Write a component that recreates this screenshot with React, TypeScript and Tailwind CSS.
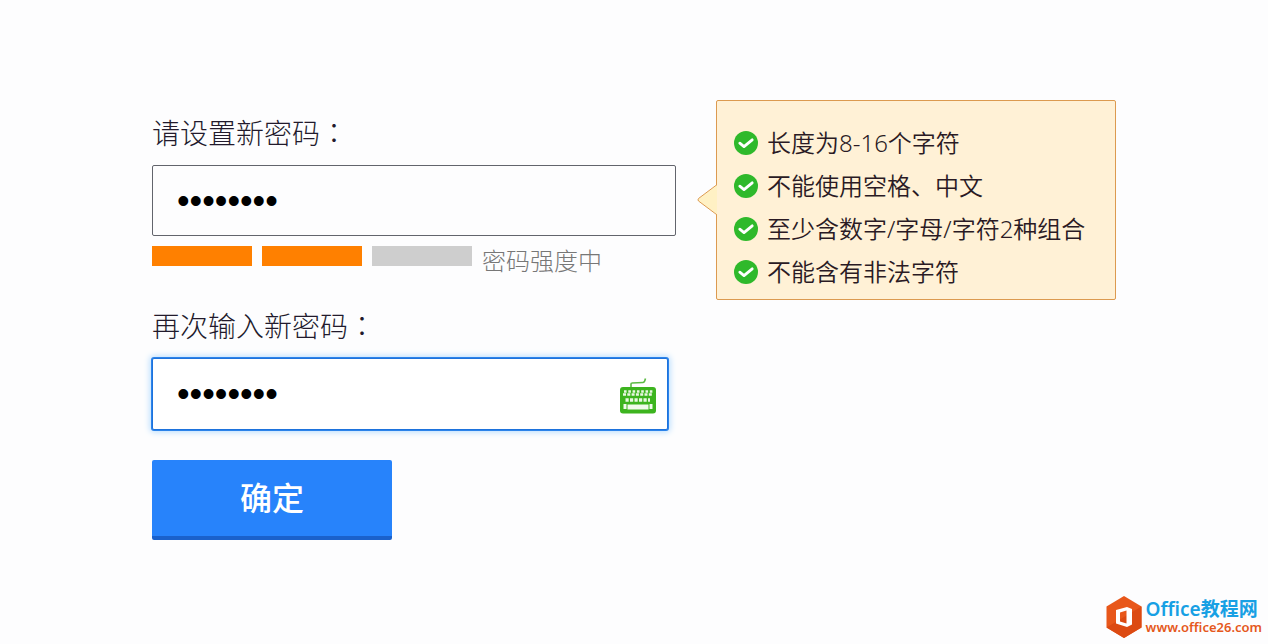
import React, { useState } from "react";

const rules = [
  "长度为8-16个字符",
  "不能使用空格、中文",
  "至少含数字/字母/字符2种组合",
  "不能含有非法字符",
];

const CheckIcon = () => (
  <svg viewBox="0 0 24 24" className="size-6 shrink-0" aria-hidden="true">
    <circle cx="12" cy="12" r="12" fill="#2fb92b" />
    <path
      d="M5.800 12.200L10 15.600L18.200 8.800"
      fill="none"
      stroke="#fff"
      strokeWidth="2.8"
      strokeLinecap="round"
      strokeLinejoin="round"
    />
  </svg>
);

const KeyboardIcon = () => (
  <svg viewBox="0 0 36 36" className="size-9" aria-hidden="true">
    <path
      d="M11 9.5V6Q11 5 12 5L23 4.500Q24.500 4.500 25.500 0.500"
      fill="none"
      stroke="#5dbb45"
      strokeWidth="1.6"
    />
    <rect x="0" y="9" width="36" height="26.500" rx="3" fill="#3db41f" />
    <path d="M4 13.500H33" stroke="#e9f8e2" strokeWidth="2.400" strokeDasharray="2.600 1.700" />
    <path d="M3 16.500H33" stroke="#e9f8e2" strokeWidth="2.400" strokeDasharray="3 1.300" />
    <path d="M5.500 22H30" stroke="#e9f8e2" strokeWidth="3.600" strokeDasharray="3.200 1.300" />
    <path d="M3.500 26H6.500V31H3.500zM7.500 26.500H28.500V31.500H7.500zM29.500 26H32.500V31H29.500z" fill="#f1faec" />
  </svg>
);

const OfficeLogo = () => (
  <svg viewBox="0 0 36 42" className="h-[42px] w-9" aria-hidden="true">
    <path d="M18 0L35.500 10.500V31.500L18 42L0.500 31.500V10.500z" fill="#e8571a" />
    <path d="M0.500 31.500L35.500 10.500V31.500L18 42z" fill="#dc4a12" />
    <path
      d="M10 14L21 11L26 13V28.500L21 31L10 27.500zM14 16.500V25.500L20.500 27.500V14.500z"
      fill="#fff"
      fillRule="evenodd"
    />
  </svg>
);

const StrengthMeter = () => (
  <div className="mt-2.5 flex items-start gap-2.5">
    <div className="h-5 w-[100px] bg-[#ff8000]" />
    <div className="h-5 w-[100px] bg-[#ff8000]" />
    <div className="h-5 w-[100px] bg-[#cecece]" />
    <span className="text-2xl/[30px] font-light text-[#777]">密码强度中</span>
  </div>
);

// the traditional face centres the full-width colon in its cell
const Colon = () => (
  <span lang="zh-Hant" className="font-['Noto_Sans_CJK_TC',sans-serif]">
    ：
  </span>
);

const RulesPanel = () => (
  <aside className="relative w-[400px] shrink-0 rounded-xs border border-[#dc9a50] bg-[#fff1d6] pt-5 pb-1.5 pl-[17px]">
    <svg viewBox="0 0 20 30" className="absolute top-[84px] -left-5 h-[30px] w-5" aria-hidden="true">
      <path d="M20 0L1.500 13.500Q0.500 15 1.500 16L20 29.500z" fill="#fff1c4" />
      <path d="M19.500 0L1.500 13.500Q0.500 15 1.500 16L19.500 29.500" fill="none" stroke="#dc9a50" />
    </svg>
    <ul>
      {rules.map((rule) => (
        <li key={rule} className="flex h-[43px] items-center gap-[9px]">
          <CheckIcon />
          <span className="text-2xl font-[350] whitespace-nowrap text-[#2a1a24]">{rule}</span>
        </li>
      ))}
    </ul>
  </aside>
);

const App = () => {
  const [password, setPassword] = useState("abcd1234");
  const [confirm, setConfirm] = useState("abcd1234");

  return (
    <div
      lang="zh-Hans"
      className="flex min-h-screen flex-col bg-[#fdfdfe] font-['Noto_Sans','Noto_Sans_CJK_SC',sans-serif]"
    >
      <main className="flex items-start gap-10 px-[152px] pt-[100px]">
        <form className="w-[524px] shrink-0 pt-4" onSubmit={(e) => e.preventDefault()}>
          <label htmlFor="password" className="block text-[28px]/8 font-light text-[#221a2c]">
            请设置新密码
            <Colon />
          </label>
          <input
            id="password"
            type="password"
            value={password}
            onChange={(e) => setPassword(e.target.value)}
            className="mt-4 block h-[71px] w-full rounded-xs border border-[#62646c] bg-transparent px-6 font-['Liberation_Sans',sans-serif] text-4xl text-black outline-none"
          />
          <StrengthMeter />

          <label htmlFor="confirm" className="mt-[33px] block text-[28px]/8 font-light text-[#221a2c]">
            再次输入新密码
            <Colon />
          </label>
          <div className="mt-4 mr-2 flex h-[72px] items-center rounded-xs border border-[#1d72dc] bg-white pr-[11px] shadow-[0_0_0_1px_#2b83ea,0_0_6px_2px_#b5dcff]">
            <input
              id="confirm"
              type="password"
              value={confirm}
              onChange={(e) => setConfirm(e.target.value)}
              className="h-full min-w-0 flex-1 bg-transparent pl-6 font-['Liberation_Sans',sans-serif] text-4xl text-black outline-none"
            />
            <button type="button" aria-label="keyboard" className="pt-1">
              <KeyboardIcon />
            </button>
          </div>

          <button
            type="submit"
            className="mt-[30px] block h-20 w-60 rounded-xs border-b-4 border-[#1a61cb] bg-[#2783fb] text-[32px] font-medium text-white"
          >
            确定
          </button>
        </form>
        <RulesPanel />
      </main>

      <footer className="mt-auto flex items-center justify-end gap-1 pr-1.5 pb-1.5">
        <OfficeLogo />
        <div>
          <p className="text-[19px]/5 font-semibold text-[#17a0e4]">Office教程网</p>
          <a href="#" className="block text-[13px]/4 font-semibold text-[#e5581c]">
            www.office26.com
          </a>
        </div>
      </footer>
    </div>
  );
};

export default App;
